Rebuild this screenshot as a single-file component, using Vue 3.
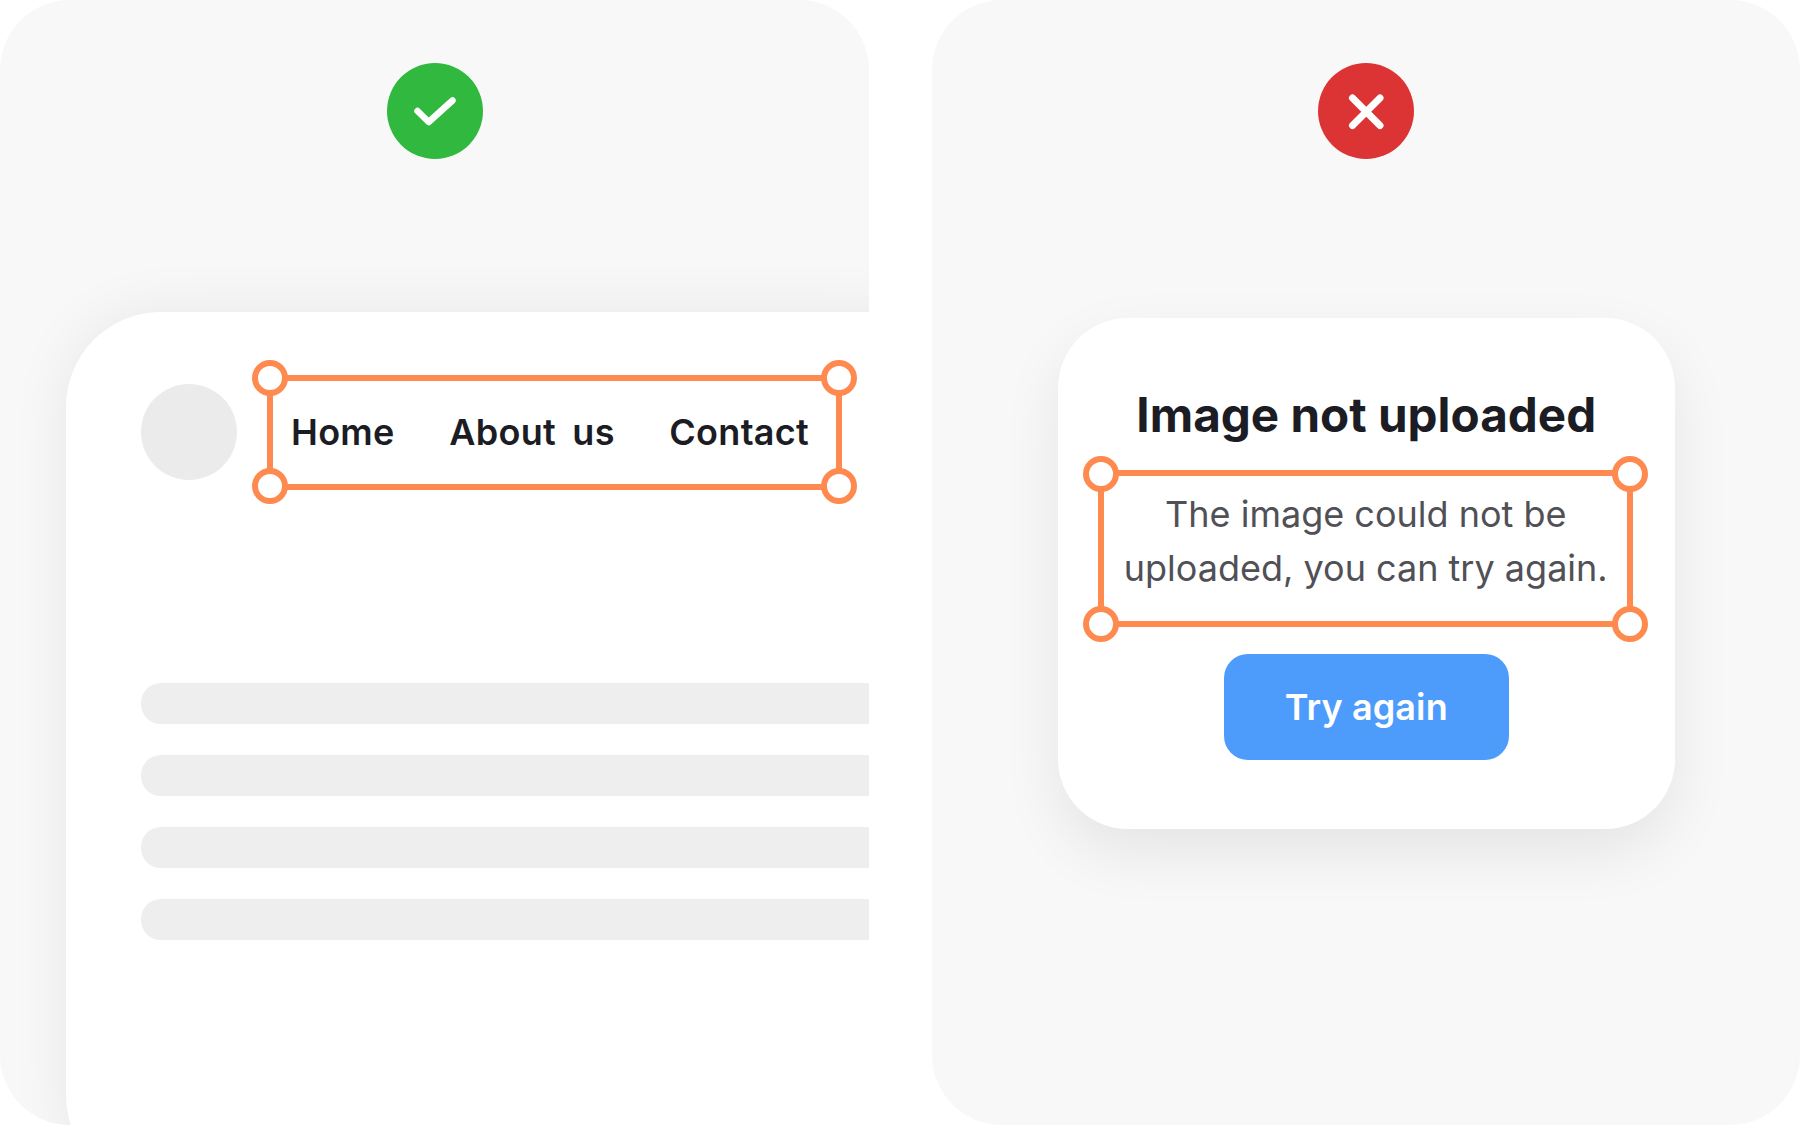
<script setup>
const navLinks = ['Home', 'About us', 'Contact'];
const corners = ['tl', 'tr', 'bl', 'br'];
const bars = [1, 2, 3, 4];
</script>

<template>
  <div class="page">
    <!-- good example -->
    <section class="panel panel-left">
      <div class="badge badge-ok">
        <svg width="96" height="96" viewBox="0 0 96 96" fill="none">
          <path d="M30.5 48L41.7 59L65.5 37.5" stroke="#fff" stroke-width="6.5" stroke-linecap="round" stroke-linejoin="round" />
        </svg>
      </div>

      <div class="page-card">
        <div class="page-head">
          <div class="avatar"></div>
          <nav class="selection nav-box">
            <span v-for="link in navLinks" :key="link" class="nav-link">{{ link }}</span>
            <span v-for="c in corners" :key="c" class="handle" :class="c"></span>
          </nav>
        </div>
        <div class="bars">
          <div v-for="b in bars" :key="b" class="bar"></div>
        </div>
      </div>
    </section>

    <!-- bad example -->
    <section class="panel panel-right">
      <div class="badge badge-bad">
        <svg width="96" height="96" viewBox="0 0 96 96" fill="none">
          <path d="M34.5 35L62 62.5M62 35L34.5 62.5" stroke="#fff" stroke-width="7" stroke-linecap="round" />
        </svg>
      </div>

      <div class="dialog">
        <h2 class="dialog-title">Image not uploaded</h2>
        <div class="selection text-box">
          <p>The image could not be<br />uploaded, you can try again.</p>
          <span v-for="c in corners" :key="c" class="handle" :class="c"></span>
        </div>
        <button class="retry">Try again</button>
      </div>
    </section>
  </div>
</template>

<style scoped>
.page {
  width: 1800px;
  height: 1125px;
  display: flex;
  justify-content: space-between;
  background-color: #fff;
  font-family: Inter, "Liberation Sans", sans-serif;
  overflow: hidden;
}

.panel {
  height: 1125px;
  background-color: #f8f8f8;
  border-radius: 70px;
  overflow: hidden;
  display: flex;
  flex-direction: column;
  align-items: center;
  padding-top: 63px;
  box-sizing: border-box;
}

.panel-left {
  width: 869px;
}

.panel-right {
  width: 868px;
  padding-left: 0.5px;
}

.badge {
  width: 96px;
  height: 96px;
  border-radius: 50%;
  flex-shrink: 0;
}

.badge svg {
  display: block;
}

.badge-ok {
  background-color: #31b83f;
}

.badge-bad {
  background-color: #dc3434;
}

.page-card {
  align-self: flex-start;
  flex-shrink: 0;
  width: 900px;
  height: 878px;
  margin-top: 153px;
  margin-left: 66px;
  padding: 62.5px 0 0 75px;
  box-sizing: border-box;
  background-color: #fff;
  border-radius: 95px;
  box-shadow: 0 0 60px rgba(0, 0, 0, 0.07);
}

.page-head {
  display: flex;
  align-items: center;
  gap: 30px;
}

.avatar {
  width: 96px;
  height: 96px;
  border-radius: 50%;
  background-color: #ebebeb;
}

.selection {
  position: relative;
  box-sizing: border-box;
  border: 6px solid #ff8a50;
}

.handle {
  position: absolute;
  width: 36px;
  height: 36px;
  box-sizing: border-box;
  border: 6px solid #ff8a50;
  border-radius: 50%;
  background-color: #fff;
}

.handle.tl {
  left: -21px;
  top: -20.5px;
}

.handle.tr {
  right: -21px;
  top: -20.5px;
}

.handle.bl {
  left: -21px;
  bottom: -20.5px;
}

.handle.br {
  right: -21px;
  bottom: -20.5px;
}

.nav-box {
  width: 574.5px;
  height: 115px;
  display: flex;
  align-items: center;
  gap: 54.5px;
  padding-left: 18px;
}

.nav-link {
  font-size: 36px;
  font-weight: 600;
  color: #1c1c24;
  letter-spacing: 0.3px;
  word-spacing: 7px;
  white-space: nowrap;
}

.bars {
  display: flex;
  flex-direction: column;
  gap: 30.5px;
  margin-top: 193px;
}

.bar {
  height: 41.5px;
  border-radius: 20px 0 0 20px;
  background-color: #eeeeee;
}

.dialog {
  flex-shrink: 0;
  width: 617.5px;
  height: 511px;
  margin-top: 159px;
  padding-top: 69px;
  box-sizing: border-box;
  display: flex;
  flex-direction: column;
  align-items: center;
  background-color: #fff;
  border-radius: 70px;
  box-shadow: 0 24px 60px rgba(0, 0, 0, 0.08);
}

.dialog-title {
  margin: 0;
  font-size: 47.6px;
  line-height: 56px;
  font-weight: 700;
  color: #1c1c24;
  white-space: nowrap;
}

.text-box {
  width: 535px;
  height: 157px;
  margin-top: 27px;
  margin-right: 1px;
  padding-bottom: 16px;
  display: flex;
  align-items: center;
  justify-content: center;
}

.text-box p {
  margin: 0;
  font-size: 36px;
  line-height: 54px;
  font-weight: 400;
  color: #505056;
  text-align: center;
  white-space: nowrap;
}

.retry {
  width: 285px;
  height: 106px;
  margin-top: 27px;
  flex-shrink: 0;
  border: none;
  border-radius: 24px;
  background-color: #4d9bfb;
  color: #fff;
  font-family: inherit;
  font-size: 36px;
  font-weight: 600;
  letter-spacing: 0.1px;
}
</style>
